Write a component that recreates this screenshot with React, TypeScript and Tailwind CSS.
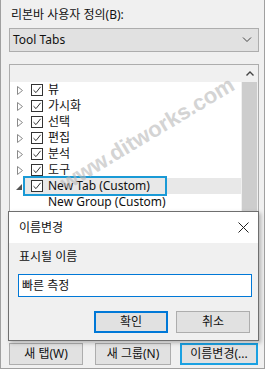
import React from "react";

const font = { fontFamily: '"Noto Sans", "Noto Sans CJK KR", sans-serif' };

const Check = () => (
  <span className="flex h-[12px] w-[12px] shrink-0 items-center justify-center border border-[#333] bg-white">
    <svg width="10" height="10" viewBox="0 0 10 10">
      <path d="M1.5 5.2 L4 7.6 L8.6 1.8" fill="none" stroke="#333" strokeWidth="1" />
    </svg>
  </span>
);

const Collapsed = () => (
  <svg width="6" height="9" viewBox="0 0 6 9" className="shrink-0">
    <path d="M0.5 0.5 L5.5 4.5 L0.5 8.5 Z" fill="none" stroke="#8a8a8a" strokeWidth="1" />
  </svg>
);

const Expanded = () => (
  <svg width="6" height="9" viewBox="0 0 6 9" className="shrink-0">
    <path d="M6 2 L6 8 L0 8 Z" fill="#555" />
  </svg>
);

const tabs = ["뷰", "가시화", "선택", "편집", "분석", "도구"];

const Btn = ({ label, className }: { label: string; className: string }) => (
  <div
    className={`flex h-[22px] items-center justify-center bg-[#e1e1e1] text-[12px] text-[#111] ${className}`}
  >
    {label}
  </div>
);

export default function App() {
  return (
    <div className="h-[370px] w-[266px] bg-white" style={font}>
      <div className="relative flex h-[369px] w-[265px] flex-col border-x border-b border-[#a0a0a0] bg-[#f0f0f0] pl-[8px] pr-[5px]">
        <div className="mt-[7px] h-[16px] pl-[2px] text-[12px] leading-[16px] text-[#111]">
          리본바 사용자 정의(B):
        </div>
        <div className="mt-[5px] flex h-[24px] items-center justify-between border border-[#adadad] bg-[#e1e1e1] pl-[3px] pr-[6px] text-[12px] text-[#111]">
          <span>Tool Tabs</span>
          <svg width="10" height="6" viewBox="0 0 10 6">
            <path d="M1 0.5 L5 4.5 L9 0.5" fill="none" stroke="#444" strokeWidth="1" />
          </svg>
        </div>

        {/* list box */}
        <div className="relative mt-[12px] flex h-[274px] overflow-hidden border border-[#adadad] bg-white">
          <div className="flex flex-1 flex-col">
            <div className="h-[17px] bg-[#f0f0f0]" />
            {tabs.map((t) => (
              <div key={t} className="flex h-[16px] items-center pl-[7px] text-[12px] text-[#111]">
                <Collapsed />
                <span className="ml-[8px]">
                  <Check />
                </span>
                <span className="ml-[5px] leading-[16px]">{t}</span>
              </div>
            ))}
            <div className="relative ml-[13px] flex h-[16px] items-center bg-[#e8e8e8] text-[12px] text-[#111]">
              <span className="absolute left-[-7px] top-[4px]">
                <Expanded />
              </span>
              <span className="ml-[8px]">
                <Check />
              </span>
              <span className="ml-[5px] leading-[16px]">New Tab (Custom)</span>
              <div className="absolute left-0 top-[-2px] h-[20px] w-[144px] border-2 border-[#1a9ad6]" />
            </div>
            <div className="flex h-[16px] items-center pl-[38px] text-[12px] leading-[16px] text-[#111]">
              New Group (Custom)
            </div>
          </div>
          <div className="flex w-[17px] flex-col bg-[#f0f0f0]">
            <div className="flex h-[17px] items-center justify-center">
              <svg width="8" height="5" viewBox="0 0 8 5">
                <path d="M0.5 4.5 L4 1 L7.5 4.5" fill="none" stroke="#444" strokeWidth="1.4" />
              </svg>
            </div>
            <div className="mx-[1px] flex-1 bg-[#cdcdcd]" />
          </div>
          <div
            className="pointer-events-none absolute left-[38px] top-[52px] select-none text-[22px] font-bold text-[#b8b8b8] opacity-60"
            style={{ transform: "rotate(-31deg)", fontFamily: '"Liberation Sans", sans-serif' }}
          >
            www.ditworks.com
          </div>
        </div>

        {/* bottom buttons */}
        <div className="mt-[5px] flex">
          <Btn label="새 탭(W)" className="w-[74px] border border-[#adadad]" />
          <Btn label="새 그룹(N)" className="ml-[12px] w-[76px] border border-[#adadad]" />
          <Btn label="이름변경(..." className="ml-[9px] w-[78px] border-2 border-[#1ba1e2]" />
        </div>

        {/* rename dialog */}
        <div className="absolute left-[7px] top-[211px] flex h-[130px] w-[251px] flex-col border border-[#6f6f6f] bg-[#f0f0f0] shadow-[2px_2px_4px_rgba(0,0,0,0.25)]">
          <div className="flex h-[31px] items-center justify-between bg-white pl-[10px] pr-[9px] text-[12px] text-[#111]">
            <span>이름변경</span>
            <svg width="11" height="11" viewBox="0 0 11 11">
              <path d="M0.5 0.5 L10.5 10.5 M10.5 0.5 L0.5 10.5" stroke="#222" strokeWidth="1" />
            </svg>
          </div>
          <div className="mt-[6px] pl-[10px] text-[12px] leading-[16px] text-[#111]">표시될 이름</div>
          <div className="ml-[9px] mt-[9px] flex h-[23px] w-[234px] items-center border border-[#0078d7] bg-white pl-[3px] text-[12px] text-[#111]">
            빠른 측정
          </div>
          <div className="mt-[14px] flex pl-[85px]">
            <Btn label="확인" className="w-[74px] border-2 border-[#0078d7]" />
            <Btn label="취소" className="ml-[8px] w-[74px] border border-[#adadad]" />
          </div>
        </div>
      </div>
    </div>
  );
}
